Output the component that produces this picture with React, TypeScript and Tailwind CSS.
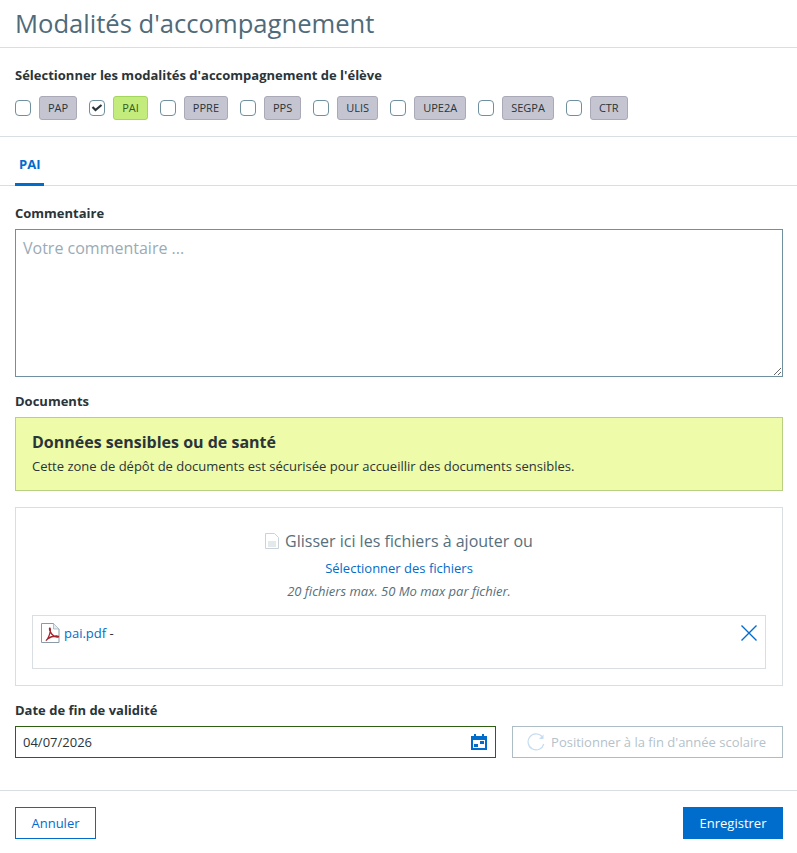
const MODALITES = ["PAP", "PAI", "PPRE", "PPS", "ULIS", "UPE2A", "SEGPA", "CTR"];

function Label({ children }: { children: string }) {
  return <div className="text-[13px] font-bold leading-[18px] text-[#2a3439]">{children}</div>;
}

function PdfIcon() {
  return (
    <svg width="19" height="20" viewBox="0 0 19 20" className="shrink-0">
      <path d="M.5.5h12l5.500 5.500V19.500H.5z" fill="#fff" stroke="#8a9ba8" />
      <path d="M12.500.5v5.500H18" fill="#e6ebee" stroke="#8a9ba8" strokeWidth=".6" />
      <path
        d="M5 17.500c1.500-.8 3.800-5.500 4.300-9.500.2-1.600-.1-3.200-.6-3-.6.300-.2 3 2 6 1.500 2 4 3.400 6.300 3 1-.2.500-1-1-1-3-.1-7.500 1.300-9.500 3-1 .9-1.500 1.500-1 1.500z"
        fill="none"
        stroke="#a3232f"
        strokeWidth="1.300"
      />
    </svg>
  );
}

export default function App() {
  return (
    <div className="min-h-[853px] w-[797px] bg-white font-['Open_Sans',sans-serif] text-[#2a3439]">
      {/* Title */}
      <div className="h-[48px] border-b border-[#d8dee2] px-[15px]">
        <h1 className="text-[25.6px] leading-[47px] font-normal text-[#4f6b7a]">Modalités d'accompagnement</h1>
      </div>

      {/* Selection */}
      <div className="h-[89px] border-b border-[#d8dee2] px-[15px] pt-[18px]">
        <Label>Sélectionner les modalités d'accompagnement de l'élève</Label>
        <div className="mt-[12px] flex items-center gap-[12px]">
          {MODALITES.map((m) => (
            <div key={m} className="flex items-center gap-[8px]">
              <span className="flex h-[16px] w-[16px] items-center justify-center rounded-[4px] border border-[#6f909f] bg-white">
                {m === "PAI" && (
                  <svg width="12" height="10" viewBox="0 0 12 10">
                    <path d="M1.500 4 4.500 7 10.500 2" fill="none" stroke="#2a3439" strokeWidth="2.200" />
                  </svg>
                )}
              </span>
              <span
                className={
                  m === "PAI"
                    ? "flex h-[24px] items-center rounded-[3px] border border-[#a3d65c] bg-[#c4ec7d] px-[8px] text-[11px] text-[#3a5a1c]"
                    : "flex h-[24px] items-center rounded-[3px] border border-[#a9a9b8] bg-[#c5c5d2] px-[8px] text-[11px] text-[#2a3439]"
                }
              >
                {m}
              </span>
            </div>
          ))}
        </div>
      </div>

      {/* Tab */}
      <div className="flex h-[49px] items-end border-b border-[#d8dee2] px-[15px]">
        <div className="-mb-px h-[32px] border-b-[3px] border-[#006dcc] px-[4px] text-[13px] leading-[20px] font-bold text-[#006dcc]">
          PAI
        </div>
      </div>

      <div className="px-[14px] pl-[15px]">
        <div className="pt-[18px]">
          <Label>Commentaire</Label>
        </div>
        <textarea
          placeholder="Votre commentaire ..."
          className="mt-[7px] block h-[148px] w-full rounded-none border border-[#6f909f] px-[7px] py-[6px] text-[16px] leading-[24px] placeholder:text-[#9aabb5] outline-none"
        />

        <div className="mt-[15px]">
          <Label>Documents</Label>
        </div>
        <div className="mt-[7px] h-[74px] border border-[#b9cf83] bg-[#eefba8] px-[16px] pt-[13px]">
          <div className="text-[16px] leading-[22px] font-bold text-[#2a3439]">Données sensibles ou de santé</div>
          <div className="mt-[4px] text-[13px] leading-[18px] text-[#2a3439]">
            Cette zone de dépôt de documents est sécurisée pour accueillir des documents sensibles.
          </div>
        </div>

        {/* Drop zone */}
        <div className="mt-[16px] h-[179px] border border-[#d8dee2] px-[16px] pt-[22px]">
          <div className="flex items-center justify-center gap-[6px] text-[16px] leading-[22px] text-[#566f7d]">
            <svg width="14" height="16" viewBox="0 0 14 16">
              <path d="M.5.5h9l4 4v11H.5z" fill="#fff" stroke="#c9d3d9" />
              <path d="M3 9h8M3 11h8M3 13h8" stroke="#c9d3d9" />
            </svg>
            Glisser ici les fichiers à ajouter ou
          </div>
          <div className="mt-[7px] text-center text-[13px] leading-[18px] text-[#006dcc]">Sélectionner des fichiers</div>
          <div className="mt-[5px] text-center text-[13px] leading-[18px] text-[#566f7d] italic">
            20 fichiers max. 50 Mo max par fichier.
          </div>
          <div className="mt-[15px] flex h-[54px] items-start justify-between border border-[#d8dee2] pt-[7px] pr-[7px] pl-[8px]">
            <div className="flex items-center gap-[4px] text-[13px] leading-[20px]">
              <PdfIcon />
              <span>
                <span className="text-[#006dcc]">pai.pdf</span> -
              </span>
            </div>
            <svg width="18" height="18" viewBox="0 0 18 18" className="mt-[1px]">
              <path d="M1.500 1.500 16.500 16.500M16.500 1.500 1.500 16.500" stroke="#006dcc" strokeWidth="1.400" />
            </svg>
          </div>
        </div>

        {/* Date */}
        <div className="mt-[15px]">
          <Label>Date de fin de validité</Label>
        </div>
        <div className="mt-[7px] flex gap-[16px]">
          <div className="flex h-[32px] w-[481px] items-center justify-between border border-[#2f5f10] pr-[8px] pl-[7px] text-[13px]">
            <span className="pt-[2px]">04/07/2026</span>
            <svg width="16" height="16" viewBox="0 0 16 16">
              <path d="M3 0h2v2h6V0h2v2h3v14H0V2h3z" fill="#006dcc" />
              <path d="M2 6h12v8H2z" fill="#fff" />
              <path d="M3 10h4v3H3zM9 7h4v3H9z" fill="#006dcc" />
            </svg>
          </div>
          <div className="flex h-[32px] w-[271px] items-center justify-center gap-[6px] border border-[#adbdc5] pr-[2px] text-[13px] text-[#b4c2ca]">
            <svg width="18" height="18" viewBox="0 0 18 18">
              <path d="M15 3.500A8 8 0 1 0 16.800 11" fill="none" stroke="#c6dcf0" strokeWidth="1.200" />
              <path d="M16.500 1.500v4.500H12z" fill="#c6dcf0" />
            </svg>
            <span className="pt-[2px]">Positionner à la fin d'année scolaire</span>
          </div>
        </div>
      </div>

      {/* Footer */}
      <div className="mt-[32px] flex justify-between border-t border-[#d8dee2] px-[14px] pt-[16px] pl-[15px]">
        <button className="h-[32px] w-[81px] border border-[#006dcc] pt-[2px] text-[13px] text-[#006dcc]">Annuler</button>
        <button className="h-[32px] w-[100px] bg-[#006dcc] pt-[2px] text-[13px] text-white">Enregistrer</button>
      </div>
    </div>
  );
}
